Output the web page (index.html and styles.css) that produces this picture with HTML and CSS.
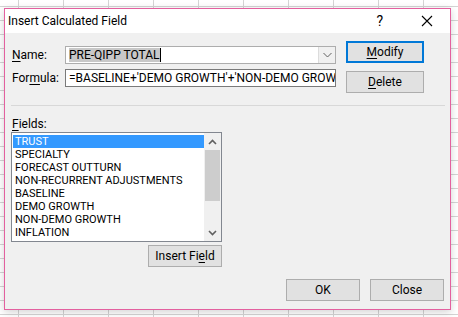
FILE: index.html
```html
<html lang="en">
  <head>
    <meta charset="UTF-8" />
    <title>Insert Calculated Field</title>
    <link rel="stylesheet" href="styles.css">
  </head>
  <body>
    <div class="dialog">
      <div class="titlebar">
        <span class="title">Insert Calculated Field</span>
        <span class="help">?</span>
        <svg class="close-x" width="12" height="12" viewBox="0 0 12 12">
          <path d="M1 1 L11 11 M11 1 L1 11" stroke="#000" stroke-width="1.1" fill="none" />
        </svg>
      </div>

      <div class="content">
        <div class="top">
          <div class="form">
            <div class="row">
              <label class="label"><u>N</u>ame:</label>
              <div class="combo">
                <span class="combo-text"><span class="sel">PRE-QIPP TOTAL</span><span class="caret"></span></span>
                <span class="combo-btn">
                  <svg width="9" height="6" viewBox="0 0 9 6">
                    <path d="M0.5 1 L4.5 5 L8.5 1" stroke="#606060" stroke-width="1" fill="none" />
                  </svg>
                </span>
              </div>
            </div>
            <div class="row">
              <label class="label">For<u>m</u>ula:</label>
              <div class="input"><span>=BASELINE+'DEMO GROWTH'+'NON-DEMO GROW</span></div>
            </div>
          </div>
          <div class="side-buttons">
            <button class="btn btn-default"><u>M</u>odify</button>
            <button class="btn"><u>D</u>elete</button>
          </div>
        </div>

        <div class="separator"></div>

        <div class="fields-label"><u>F</u>ields:</div>
        <div class="listbox">
          <ul class="items">
            <li class="selected">TRUST</li>
            <li>SPECIALTY</li>
            <li>FORECAST OUTTURN</li>
            <li>NON-RECURRENT ADJUSTMENTS</li>
            <li>BASELINE</li>
            <li>DEMO GROWTH</li>
            <li>NON-DEMO GROWTH</li>
            <li>INFLATION</li>
          </ul>
          <div class="scrollbar">
            <svg class="arrow" width="9" height="6" viewBox="0 0 9 6">
              <path d="M1 5 L4.5 1.5 L8 5" stroke="#606060" stroke-width="1.6" fill="none" />
            </svg>
            <div class="thumb"></div>
            <div class="track"></div>
            <svg class="arrow" width="9" height="6" viewBox="0 0 9 6">
              <path d="M1 1 L4.5 4.5 L8 1" stroke="#606060" stroke-width="1.6" fill="none" />
            </svg>
          </div>
        </div>

        <div class="insert-row">
          <button class="btn btn-insert">Insert Fi<u>e</u>ld</button>
        </div>

        <div class="footer">
          <button class="btn">OK</button>
          <button class="btn">Close</button>
        </div>
      </div>
    </div>
  </body>
</html>
```

FILE: styles.css
```css
body {
  margin: 0;
  height: 317px;
  overflow: hidden;
  background-color: #fff;
  background-image:
    linear-gradient(to right, #d4d4d4 1px, transparent 1px),
    linear-gradient(to bottom, #d4d4d4 1px, transparent 1px);
  background-size: 45px 14px;
  background-position: 18px 6px;
}
* {
  font-family: Roboto, "Noto Sans", sans-serif;
  font-size: 12px;
  color: #000;
  box-sizing: border-box;
}
u {
  text-decoration: underline;
  text-underline-offset: 2px;
}
.dialog {
  margin: 8px 0 0 4px;
  width: 447px;
  height: 302px;
  border: 1px solid #e3609f;
  background: #f0f0f0;
  box-shadow: 0 2px 8px rgba(0, 0, 0, 0.18);
  display: flex;
  flex-direction: column;
}
.titlebar {
  height: 24px;
  background: #fff;
  display: flex;
  align-items: center;
  padding-left: 3px;
}
.title {
  flex: 1;
}
.help {
  font-size: 14px;
  margin-right: 38px;
}
.close-x {
  margin-right: 17px;
}
.content {
  flex: 1;
  display: flex;
  flex-direction: column;
}
.top {
  display: flex;
  padding: 8px 0 0 7px;
}
.form {
  width: 324px;
  padding-top: 5px;
  display: flex;
  flex-direction: column;
  gap: 5px;
}
.row {
  display: flex;
  align-items: center;
}
.label {
  width: 53px;
}
.combo,
.input {
  width: 271px;
  height: 18px;
  background: #fff;
  border: 1px solid #7a7a7a;
  display: flex;
  align-items: center;
  overflow: hidden;
  white-space: nowrap;
}
.combo {
  border-color: #adadad;
}
.combo-text {
  flex: 1;
  padding-left: 3px;
  display: flex;
  align-items: center;
}
.sel {
  background: #c8c8c8;
  line-height: 14px;
}
.caret {
  width: 1px;
  height: 14px;
  background: #000;
}
.combo-btn {
  width: 17px;
  height: 16px;
  background: #f0f0f0;
  border-left: 1px solid #dcdcdc;
  display: flex;
  align-items: center;
  justify-content: center;
}
.input {
  padding-left: 3px;
}
.side-buttons {
  margin-left: 10px;
  display: flex;
  flex-direction: column;
  gap: 8px;
}
.btn {
  width: 78px;
  height: 22px;
  background: #e1e1e1;
  border: 1px solid #adadad;
  padding: 0;
  text-align: center;
}
.btn-default {
  border: 2px solid #0078d7;
}
.separator {
  height: 1px;
  background: #d8d8d8;
  margin: 12px 5px 0 6px;
}
.fields-label {
  margin: 11px 0 0 7px;
  line-height: 15px;
}
.listbox {
  width: 211px;
  height: 110px;
  margin-left: 6px;
  border: 1px solid #828790;
  background: #fff;
  display: flex;
}
.items {
  list-style: none;
  margin: 0;
  padding: 2px 0 0 1px;
  flex: 1;
  overflow: hidden;
}
.items li {
  height: 13px;
  line-height: 13px;
  padding-left: 2px;
  font-size: 11px;
  white-space: nowrap;
}
.items li.selected {
  background: #3399ff;
  color: #fff;
}
.scrollbar {
  width: 17px;
  background: #f0f0f0;
  display: flex;
  flex-direction: column;
  align-items: center;
}
.arrow {
  margin: 6px 0 5px;
}
.thumb {
  width: 15px;
  height: 51px;
  background: #cdcdcd;
}
.track {
  flex: 1;
}
.insert-row {
  width: 217px;
  display: flex;
  justify-content: flex-end;
  margin-top: 3px;
}
.btn-insert {
  width: 74px;
}
.footer {
  display: flex;
  justify-content: flex-end;
  gap: 10px;
  margin: 12px 6px 0 0;
}
.footer .btn {
  width: 74px;
}
```
